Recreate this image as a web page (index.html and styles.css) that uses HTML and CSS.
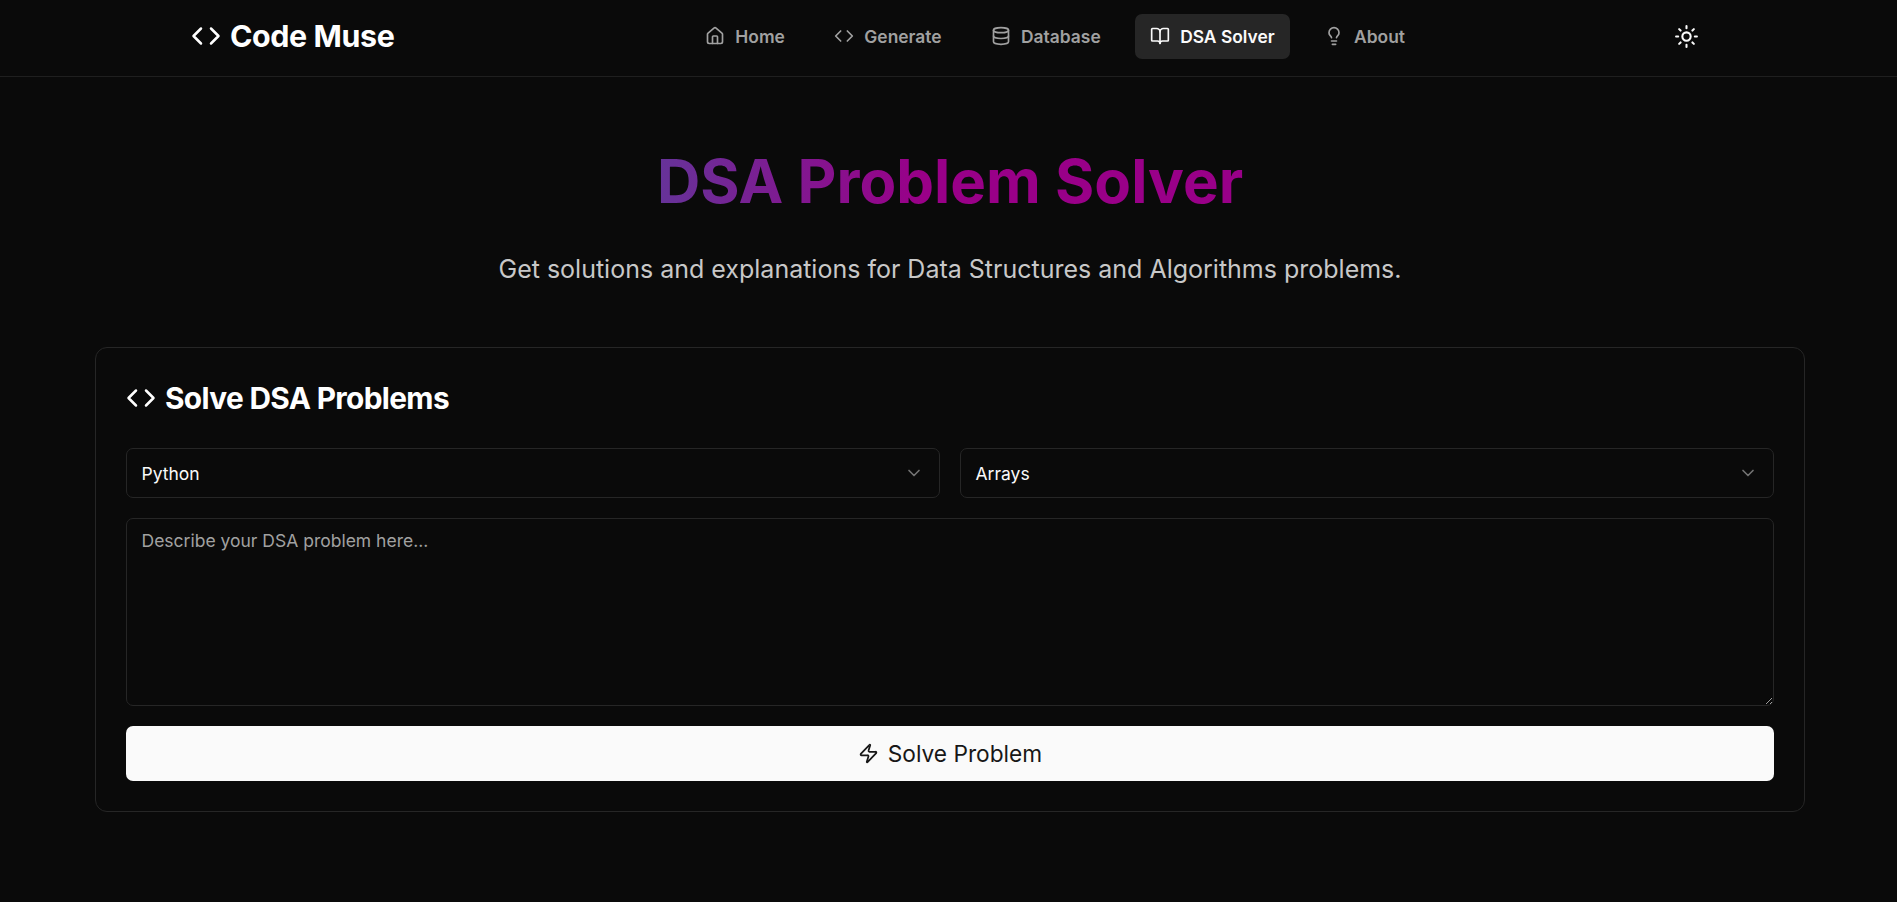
FILE: index.html
```html
<!DOCTYPE html>
<html lang="en">
<head>
    <meta charset="UTF-8">
    <meta name="viewport" content="width=device-width, initial-scale=1.0">
    <title>Code Muse - DSA Solver</title>
    <link rel="stylesheet" href="styles.css">
</head>
<body>

<header class="topbar">
    <a class="logo" href="#">
        <svg class="icon logo-icon" viewBox="0 0 24 24"><polyline points="16 18 22 12 16 6"/><polyline points="8 6 2 12 8 18"/></svg>
        <span>Code Muse</span>
    </a>

    <nav class="nav">
        <a class="nav-link" href="#">
            <svg class="icon" viewBox="0 0 24 24"><path d="M15 21v-8a1 1 0 0 0-1-1h-4a1 1 0 0 0-1 1v8"/><path d="M3 10a2 2 0 0 1 .709-1.528l7-5.999a2 2 0 0 1 2.582 0l7 5.999A2 2 0 0 1 21 10v9a2 2 0 0 1-2 2H5a2 2 0 0 1-2-2z"/></svg>
            Home
        </a>
        <a class="nav-link" href="#">
            <svg class="icon" viewBox="0 0 24 24"><polyline points="16 18 22 12 16 6"/><polyline points="8 6 2 12 8 18"/></svg>
            Generate
        </a>
        <a class="nav-link" href="#">
            <svg class="icon" viewBox="0 0 24 24"><ellipse cx="12" cy="5" rx="9" ry="3"/><path d="M3 5V19A9 3 0 0 0 21 19V5"/><path d="M3 12A9 3 0 0 0 21 12"/></svg>
            Database
        </a>
        <a class="nav-link active" href="#">
            <svg class="icon" viewBox="0 0 24 24"><path d="M12 7v14"/><path d="M3 18a1 1 0 0 1-1-1V4a1 1 0 0 1 1-1h5a4 4 0 0 1 4 4 4 4 0 0 1 4-4h5a1 1 0 0 1 1 1v13a1 1 0 0 1-1 1h-6a3 3 0 0 0-3 3 3 3 0 0 0-3-3z"/></svg>
            DSA Solver
        </a>
        <a class="nav-link" href="#">
            <svg class="icon" viewBox="0 0 24 24"><path d="M15 14c.2-1 .7-1.7 1.5-2.5 1-.9 1.5-2.2 1.5-3.5A6 6 0 0 0 6 8c0 1 .2 2.2 1.5 3.5.7.7 1.3 1.5 1.5 2.5"/><path d="M9 18h6"/><path d="M10 22h4"/></svg>
            About
        </a>
    </nav>

    <button class="theme-btn" type="button" aria-label="Toggle theme">
        <svg class="icon theme-icon" viewBox="0 0 24 24"><circle cx="12" cy="12" r="4"/><path d="M12 2v2"/><path d="M12 20v2"/><path d="m4.93 4.93 1.41 1.41"/><path d="m17.66 17.66 1.41 1.41"/><path d="M2 12h2"/><path d="M20 12h2"/><path d="m6.34 17.66-1.41 1.41"/><path d="m19.07 4.93-1.41 1.41"/></svg>
    </button>
</header>

<main class="page">
    <h1 class="page-title"><span>DSA Problem Solver</span></h1>
    <p class="page-sub">Get solutions and explanations for Data Structures and Algorithms problems.</p>

    <section class="card">
        <h2 class="card-title">
            <svg class="icon card-icon" viewBox="0 0 24 24"><polyline points="16 18 22 12 16 6"/><polyline points="8 6 2 12 8 18"/></svg>
            Solve DSA Problems
        </h2>

        <div class="select-row">
            <button class="select" type="button">
                <span>Python</span>
                <svg class="icon chevron" viewBox="0 0 24 24"><path d="m6 9 6 6 6-6"/></svg>
            </button>
            <button class="select" type="button">
                <span>Arrays</span>
                <svg class="icon chevron" viewBox="0 0 24 24"><path d="m6 9 6 6 6-6"/></svg>
            </button>
        </div>

        <textarea class="problem" placeholder="Describe your DSA problem here..."></textarea>

        <button class="solve-btn" type="button">
            <svg class="icon solve-icon" viewBox="0 0 24 24"><path d="M4 14a1 1 0 0 1-.78-1.63l9.9-10.2a.5.5 0 0 1 .86.46l-1.92 6.02A1 1 0 0 0 13 10h7a1 1 0 0 1 .78 1.63l-9.9 10.2a.5.5 0 0 1-.86-.46l1.92-6.02A1 1 0 0 0 11 14z"/></svg>
            Solve Problem
        </button>
    </section>
</main>

</body>
</html>
```

FILE: styles.css
```css
/* Dark theme */
* {
    box-sizing: border-box;
}
body {
    margin: 0;
    height: 902px;
    overflow: hidden;
    background: #0a0a0a;
    color: #fafafa;
    font-family: Inter, "Noto Sans", sans-serif;
}
.icon {
    width: 20px;
    height: 20px;
    fill: none;
    stroke: currentColor;
    stroke-width: 2;
    stroke-linecap: round;
    stroke-linejoin: round;
    flex-shrink: 0;
}

/* Top bar */
.topbar {
    display: flex;
    align-items: center;
    height: 77px;
    padding: 0 188px 4px 191px;
    border-bottom: 1px solid #1f1f1f;
}
.logo {
    display: flex;
    align-items: center;
    gap: 9px;
    color: #ffffff;
    font-size: 30.4px;
    font-weight: 700;
    letter-spacing: -0.4px;
    text-decoration: none;
}
.logo-icon {
    width: 30px;
    height: 30px;
}
.nav {
    display: flex;
    align-items: center;
    gap: 19.5px;
    margin-left: 296px;
}
.nav-link {
    display: flex;
    align-items: center;
    gap: 10px;
    height: 45px;
    padding: 0 15px;
    border-radius: 7px;
    color: #a1a1a1;
    font-size: 17.4px;
    font-weight: 600;
    text-decoration: none;
}
.nav-link.active {
    background: #262626;
    color: #fafafa;
}
.theme-btn {
    display: flex;
    align-items: center;
    justify-content: center;
    width: 45px;
    height: 45px;
    margin-left: auto;
    padding: 0;
    border: none;
    background: none;
    color: #fafafa;
}
.theme-icon {
    width: 25px;
    height: 25px;
}

/* Heading */
.page {
    padding: 74px 92px 0 95px;
}
.page-title {
    margin: 0;
    font-size: 60px;
    line-height: 60px;
    font-weight: 700;
    text-align: center;
}
.page-title span {
    background: linear-gradient(90deg, #663399, #990088 45%);
    -webkit-background-clip: text;
    background-clip: text;
    color: transparent;
}
.page-sub {
    margin: 42px 0 0;
    color: #c8c8c8;
    font-size: 25px;
    line-height: 32px;
    text-align: center;
}

/* Card */
.card {
    margin-top: 62px;
    height: 465px;
    padding: 30px;
    border: 1px solid #262626;
    border-radius: 12px;
    background: #0a0a0a;
}
.card-title {
    display: flex;
    align-items: center;
    gap: 9px;
    height: 39px;
    margin: 0;
    color: #ffffff;
    font-size: 29.8px;
    font-weight: 700;
    letter-spacing: -0.65px;
}
.card-icon {
    width: 30px;
    height: 30px;
}
.select-row {
    display: grid;
    grid-template-columns: 1fr 1fr;
    gap: 20px;
    margin-top: 31px;
}
.select {
    display: flex;
    align-items: center;
    justify-content: space-between;
    height: 50px;
    padding: 0 15px 0 14.5px;
    border: 1px solid #262626;
    border-radius: 7px;
    background: #0a0a0a;
    color: #fafafa;
    font-family: inherit;
    font-size: 17.5px;
}
.chevron {
    color: #737373;
}
.problem {
    display: block;
    width: 100%;
    height: 188px;
    margin-top: 20px;
    padding: 10px 14.5px;
    border: 1px solid #262626;
    border-radius: 7px;
    outline: none;
    resize: vertical;
    background: #0a0a0a;
    color: #fafafa;
    font-family: inherit;
    font-size: 17.5px;
    line-height: 24px;
}
.problem::placeholder {
    color: #a1a1a1;
}
.solve-btn {
    display: flex;
    align-items: center;
    justify-content: center;
    gap: 9px;
    width: 100%;
    height: 55px;
    margin-top: 20px;
    border: none;
    border-radius: 7px;
    background: #fafafa;
    color: #171717;
    font-family: inherit;
    font-size: 22.7px;
    font-weight: 400;
}
.solve-icon {
    width: 21px;
    height: 21px;
}
```
